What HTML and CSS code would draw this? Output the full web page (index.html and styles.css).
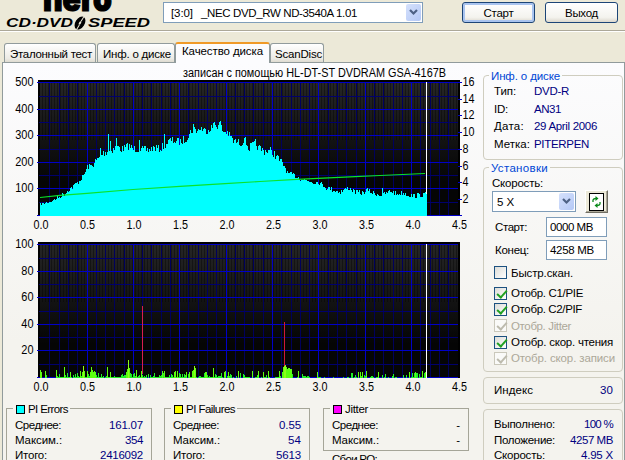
FILE: index.html
```html
<!DOCTYPE html>
<html lang="ru">
<head>
<meta charset="utf-8">
<title>Nero CD-DVD Speed</title>
<link rel="stylesheet" href="styles.css">
</head>
<body>
<div class="window">
  <header class="toolbar">
    <svg class="logo" width="163" height="30" viewBox="0 0 163 30">
      <text class="nero" x="43" y="10.5" textLength="69" lengthAdjust="spacingAndGlyphs">nero</text>
      <text class="product" x="6" y="27" textLength="67" lengthAdjust="spacingAndGlyphs">CD·DVD</text>
      <text class="product" x="88" y="27" textLength="62" lengthAdjust="spacingAndGlyphs">SPEED</text>
      <g transform="rotate(32 80 23)"><ellipse cx="80" cy="23" rx="4.6" ry="7.2"/><path d="M80 16v5M80.500 25v5" stroke="#ece9d8" stroke-width="1"/><ellipse cx="80" cy="23" rx="1" ry="2" fill="#ece9d8"/></g>
    </svg>
    <div class="combo drive"><span data-w="21">[3:0]</span><span class="model" data-w="155">_NEC DVD_RW ND-3540A 1.01</span><i class="arrow"><svg width="9" height="7" viewBox="0 0 9 7"><path d="M1 1l3.500 3.500L8 1"/></svg></i></div>
    <button class="btn default"><span data-w="29">Старт</span></button>
    <button class="btn"><span data-w="32">Выход</span></button>
  </header>
  <nav class="tabs">
    <div class="tab t1"><span data-w="81">Эталонный тест</span></div>
    <div class="tab t2"><span data-w="67">Инф. о диске</span></div>
    <div class="tab t3 active"><span data-w="80">Качество диска</span></div>
    <div class="tab t4"><span data-w="46">ScanDisc</span></div>
  </nav>
  <main class="page">
    <section class="left">
      <svg class="chart" id="pie" width="480" height="167" viewBox="3 63 480 167"></svg>
      <svg class="chart" id="pif" width="480" height="167" viewBox="3 230 480 167"></svg>
      <div class="stats">
        <div class="stat tall">
          <h3><i class="sw cyan"></i><span data-w="39">PI Errors</span></h3>
          <p><span data-w="45">Среднее:</span><b data-w="33">161.07</b></p>
          <p><span data-w="46">Максим.:</span><b data-w="17">354</b></p>
          <p><span data-w="31">Итого:</span><b data-w="42">2416092</b></p>
        </div>
        <div class="stat tall">
          <h3><i class="sw yellow"></i><span data-w="48">PI Failures</span></h3>
          <p><span data-w="45">Среднее:</span><b data-w="21">0.55</b></p>
          <p><span data-w="46">Максим.:</span><b data-w="12">54</b></p>
          <p><span data-w="31">Итого:</span><b data-w="24">5613</b></p>
        </div>
        <div class="third">
          <div class="stat">
            <h3><i class="sw magenta"></i><span data-w="22">Jitter</span></h3>
            <p><span data-w="45">Среднее:</span><b class="none">-</b></p>
            <p><span data-w="46">Максим.:</span><b class="none">-</b></p>
          </div>
          <p class="po"><span data-w="44">Сбои PO:</span><b>-</b></p>
        </div>
      </div>
    </section>
    <aside class="side">
      <div class="group info">
        <h2><span data-w="68">Инф. о диске</span></h2>
        <p><span data-w="21">Тип:</span></p><b><span data-w="34">DVD-R</span></b>
        <p><span data-w="13">ID:</span></p><b><span data-w="26">AN31</span></b>
        <p><span data-w="29">Дата:</span></p><b><span data-w="62">29 April 2006</span></b>
        <p><span data-w="35">Метка:</span></p><b><span data-w="54">PITERPEN</span></b>
      </div>
      <div class="group settings">
        <h2><span data-w="56">Установки</span></h2>
        <p class="speed"><span data-w="50">Скорость:</span></p>
        <div class="speedrow">
          <div class="combo"><span data-w="16">5 X</span><i class="arrow"><svg width="9" height="7" viewBox="0 0 9 7"><path d="M1 1l3.500 3.500L8 1"/></svg></i></div>
          <div class="refresh"><svg width="15" height="18" viewBox="0 0 15 18"><rect x=".5" y=".5" width="14" height="17" fill="#fff" stroke="#000"/><path d="M4 9V7Q4.500 5.500 7 5.500M11 9v2Q10.500 12.500 8 12.500" fill="none" stroke="#0a8a1a" stroke-width="1.300"/><path d="M6.500 3v5L9.500 5.500zM8.500 10v5L5.500 12.500z" fill="#0a8a1a"/></svg></div>
        </div>
        <div class="field"><span data-w="31">Старт:</span><div class="input"><span data-w="42">0000 MB</span></div></div>
        <div class="field"><span data-w="33">Конец:</span><div class="input"><span data-w="43">4258 MB</span></div></div>
        <div class="checks">
          <label class="check first"><i></i><span data-w="61">Быстр.скан.</span></label>
          <label class="check on"><i></i><span data-w="71">Отобр. C1/PIE</span></label>
          <label class="check on"><i></i><span data-w="70">Отобр. C2/PIF</span></label>
          <label class="check on off"><i></i><span data-w="59">Отобр. Jitter</span></label>
          <label class="check on"><i></i><span data-w="101">Отобр. скор. чтения</span></label>
          <label class="check on off"><i></i><span data-w="103">Отобр. скор. записи</span></label>
        </div>
      </div>
      <div class="group index"><p><span data-w="38">Индекс</span><b data-w="12">30</b></p></div>
      <div class="group progress">
        <p><span data-w="60">Выполнено:</span><b data-w="28">100 %</b></p>
        <p><span data-w="60">Положение:</span><b data-w="42">4257 MB</b></p>
        <p><span data-w="50">Скорость:</span><b data-w="31">4.95 X</b></p>
      </div>
    </aside>
  </main>
</div>
<script src="charts.js"></script>
</body>
</html>
```
FILE: styles.css
```css
* { box-sizing: border-box; margin: 0; padding: 0; }
body { width: 625px; height: 460px; overflow: hidden; background: #ece9d8; font: 11.5px/14px "Liberation Sans", Arial, sans-serif; color: #000; }
b { font-weight: normal; color: #000080; }
i { font-style: normal; }
span, b { white-space: nowrap; }
.window { width: 625px; height: 460px; overflow: hidden; display: flex; flex-direction: column; }

.toolbar { height: 32px; flex: none; display: flex; align-items: flex-start; border-bottom: 1px solid #fff; box-shadow: inset 0 -1px #aca899; }
.logo { flex: none; }
.nero { font: 900 35px "Inter", "Liberation Sans", sans-serif; stroke: #000; stroke-width: 1.2px; }
.product { font: italic 700 12px "Liberation Sans", sans-serif; }
.combo { display: flex; align-items: center; background: #fff; border: 1px solid #7f9db9; }
.arrow { margin-left: auto; width: 15px; align-self: stretch; margin-block: 1px; margin-right: 1px; border-radius: 2px; background: linear-gradient(135deg, #d5e1fc, #b4c8f6); display: flex; align-items: center; justify-content: center; }
.arrow path { fill: none; stroke: #4d6185; stroke-width: 2.2; }
.drive { width: 260px; height: 21px; margin-top: 2px; padding-left: 7px; }
.model { margin-left: 8px; }
.btn { width: 73px; height: 21px; margin: 2px 0 0 39px; font: inherit; border: 1px solid #1c4577; border-radius: 3px; background: linear-gradient(#fff, #f4f3ee 75%, #dcd8cd); line-height: 14px; }
.btn + .btn { margin-left: 10px; }
.btn.default { box-shadow: inset 0 0 0 2px #a9c4ef; }

.tabs { height: 31px; flex: none; display: flex; align-items: flex-end; padding-left: 4px; position: relative; z-index: 1; }
.tab { height: 19px; margin-bottom: 1px; border: 1px solid #919b9c; border-bottom: 0; border-radius: 3px 3px 0 0; background: linear-gradient(#fff, #ecebe5 80%, #dedbd0); padding: 3px 0 0 5px; }
.t1 { width: 92px; }
.t2 { width: 78px; margin-left: 1px; }
.t3 { width: 95px; }
.t4 { width: 54px; padding-left: 4px; }
.tab.active { height: 21px; margin-bottom: 0; padding: 0 0 0 6px; border-top: 2px solid #f09a28; background: #fcfcfe; }

.page { margin: -1px 0 0 2px; width: 623px; height: 398px; flex: none; display: flex; border: 1px solid #919b9c; border-bottom: 0; background: linear-gradient(#fcfcfe, #f4f3ee 70%); }
.left { width: 480px; flex: none; }
.chart { display: block; }
.chart text { font: 12px "Liberation Sans", sans-serif; }
.stats { display: flex; gap: 12px; padding: 11px 0 0 3px; }
.stat { width: 146px; height: 43px; border: 1px solid #a5a598; color: #000; }
.third { margin-left: 1px; }
.stat.tall { height: 70px; }
.stat h3 { font: inherit; width: max-content; height: 14px; margin: -7px 0 2px 6px; padding: 0 2px 0 3px; display: flex; align-items: center; background: #f5f4f0; }
.sw { width: 9px; height: 9px; border: 1px solid #000; margin-right: 3px; }
.cyan { background: #0ff; }
.yellow { background: #ff0; }
.magenta { background: #f0f; }
.stat p, .po { display: flex; justify-content: space-between; height: 15px; line-height: 15px; padding: 0 8px; }
.po { padding: 0 9px; margin-top: 1px; }
.none { color: #000; }

.side { width: 140px; padding: 12px 0 0; }
.group { width: 140px; border: 1px solid #cfcdbf; border-radius: 4px; }
.group h2 { font: inherit; color: #0046d5; height: 14px; width: max-content; margin: -7px 0 0 5px; padding: 0 2px; background: #fbfbfc; }
.info { height: 85px; display: grid; grid-template-columns: 40px 1fr; grid-template-rows: 7px repeat(4, 17.700px); padding-left: 10px; }
.info h2 { grid-column: 1 / 3; margin-left: -5px; }
.info p, .info b { line-height: 16px; }
.settings { height: 205px; margin-top: 7px; }
.settings h2 { background: #f9f9f9; }
.speed { margin: 1px 0 0 8px; }
.speedrow { display: flex; margin: 0 0 0 8px; gap: 9px; }
.speedrow .combo { width: 84px; height: 21px; margin-top: 1px; padding-left: 4px; }
.refresh { width: 23px; height: 23px; border: 1px solid; border-color: #fff #716f64 #716f64 #fff; box-shadow: inset -1px -1px #aca899; background: #ece9d8; display: flex; align-items: center; justify-content: center; }
.field { display: flex; justify-content: space-between; align-items: center; margin: 4px 15px 0 11px; height: 20px; }
.field + .field { margin-top: 3px; }
.input { width: 61px; height: 20px; border: 1px solid #7f9db9; background: #fff; padding: 2px 0 0 3px; }
.checks { margin: 4px 0 0 10px; }
.check { display: flex; align-items: center; height: 16.300px; }
.check.first { height: 17px; margin-bottom: 4px; }
.check i { width: 13px; height: 13px; border: 1px solid #1c5180; background: linear-gradient(135deg, #dcdcd7, #fff); margin-right: 4px; position: relative; }
.check.on i::after { content: ""; position: absolute; left: 4px; top: 0; width: 4px; height: 8px; border: solid #21a121; border-width: 0 2px 2px 0; transform: rotate(42deg); }
.check.off { color: #aca899; }
.check.off i { border-color: #cac8bb; background: #fafaf8; }
.check.off i::after { border-color: #bdbbae; }
.index { height: 27px; margin-top: 5px; padding-top: 5px; }
.progress { height: 70px; margin-top: 5px; padding-top: 7px; }
.index p, .progress p { display: flex; justify-content: space-between; height: 15.700px; padding: 0 9px 0 10px; }
```
FILE: charts.js
```js
// Set each caption to its layout width.
document.querySelectorAll('[data-w]').forEach(el => {
  el.style.display = 'inline-block';
  const natural = el.getBoundingClientRect().width;
  const w = +el.dataset.w + 1;
  el.style.letterSpacing = (w - natural) / el.textContent.length + 'px';
});

const line = (x1, y1, x2, y2, c) =>
  `<path d="M${x1} ${y1}L${x2} ${y2}" stroke="${c}" fill="none" shape-rendering="crispEdges"/>`;
const label = (x, y, w, s, anchor = 'start') =>
  `<text x="${x}" y="${y}" textLength="${w}" lengthAdjust="spacingAndGlyphs" text-anchor="${anchor}">${s}</text>`;
const rect = (x, y, w, h, c) =>
  `<rect x="${x}" y="${y}" width="${w}" height="${h}" fill="${c}" shape-rendering="crispEdges"/>`;
let seed = 7;
const rnd = () => (seed = (seed * 16807) % 2147483647) / 2147483647;

function grid(top, id, max) {
  let s = `<defs><linearGradient id="${id}" x1="0" y1="0" x2="0" y2="1"><stop offset="0" stop-color="#262626"/><stop offset=".75" stop-color="#050505"/></linearGradient></defs>`;
  s += rect(38, top, 422, 136, '#000') + rect(40, top + 2, 418, 133, `url(#${id})`);
  for (let x = 42; x < 458; x += 3) s += line(x + .5, top + 2, x + .5, top + 60, 'rgba(0,0,0,.35)');
  for (let i = 1; i < 45; i++) if (i % 5) {
    const x = Math.round(40 + i * 9.28) + .5;
    s += line(x, top + 2, x, top + 135, '#00005c');
  }
  for (let i = 0; i < 5; i++) {
    const y = Math.round(top + 15.500 + i * 26.600) + .5;
    s += line(39, y, 458, y, '#00006c');
  }
  for (let i = 1; i < 9; i++) {
    const x = Math.round(40.200 + i * 46.350) + .5;
    s += line(x, top + 2, x, top + 135, '#0000c8');
  }
  for (let i = 0; i < 6; i++) {
    const y = Math.round(top + 2 + i * 26.600) + .5;
    s += line(37, y, 458, y, '#0000c8');
    if (i < 5) {
      const t = String(max - i * max / 5);
      s += label(33.500, y + 3.200, t.length * 6.100, t, 'end');
    }
  }
  for (let i = 0; i < 10; i++) s += label(33.500 + i * 46.500, top + 148.500, 15, (i / 2).toFixed(1));
  return s;
}

// PI errors: envelope of the bars as [x, y]
const env = [[40,204],[50,202],[57,198],[62,195],[67,191],[72,187],[78,182],[83,176],[87,167],[92,165],[97,160],[100,156],[105,152],[110,150],[117,147],[122,149],[128,146],[133,149],[138,149],[147,150],[153,148],[160,149],[165,144],[170,140],[175,141],[180,142],[185,139],[190,133],[193,128],[197,131],[200,128],[205,131],[210,128],[215,125],[220,125],[223,132],[227,132],[230,138],[233,141],[240,143],[245,141],[248,148],[255,144],[258,148],[265,151],[270,151],[274,154],[279,160],[284,166],[287,173],[293,175],[299,178],[305,180],[312,182],[318,182],[325,187],[330,189],[340,192],[348,188],[356,192],[363,193],[367,190],[372,193],[382,195],[390,191],[397,194],[403,193],[411,196],[420,195],[427,194]];
const spikes = {100:148,108:134,110:141,116:138,139:140,164:134,190:130,193:124,214:122,220:121,231:136,244:138,255:139,382:188};
let s = grid(80, 'g1', 500), d = 'M40 215.500', k = 0;
for (let x = 40; x < 427; x++) {
  while (k < env.length - 2 && env[k + 1][0] <= x) k++;
  const [a, b] = [env[k], env[k + 1]];
  let y = a[1] + (b[1] - a[1]) * (x - a[0]) / (b[0] - a[0]);
  y += (rnd() - .5) * (y < 165 ? 8 : y > 198 ? 2 : 5);
  if (spikes[x]) y = spikes[x];
  d += `V${Math.round(y)}H${x + 1}`;
}
s += `<path d="${d}V216H40z" fill="#0ff" shape-rendering="crispEdges"/>`;
s += '<path d="M40 197.500L60 195.300 87 193.300 133 189.500 180 186.300 225 183.700 260 181.500 297 179.300 355 176.700 380 175.500 425 173.500" stroke="#0be32b" fill="none" stroke-width="1.200"/>';
s += line(426.5, 82, 426.5, 194, '#fff');
s += label(183, 77, 263, 'записан с помощью HL-DT-ST DVDRAM GSA-4167B');
for (let i = 0; i < 8; i++) {
  const v = 16 - i * 2, y = Math.round(82 + i * 16.700) + .5;
  s += line(458, y, 462, y, '#0000c8') + label(462.500, y + 3.200, v > 9 ? 12 : 6, v);
}
s += line(458, 215.5, 462, 215.5, '#0000c8');
document.getElementById('pie').innerHTML = s;

// PI failures
s = grid(242, 'g2', 100);
const tall = {40:8,41:6,45:7,56:8,64:11,83:12,84:7,87:7,91:11,92:8,107:11,127:9,128:18,129:10,136:8,164:7,193:8,194:12,195:10,213:10,252:7,263:6,358:6,362:6,415:6,425:6};
for (let x = 40; x < 427; x++) {
  let h = 0;
  if (x > 282 && x < 292) h = 8 + Math.round(rnd() * 5);
  else {
    const dense = x < 56 ? .1 : x < 232 ? .9 : x < 320 ? .55 : x < 350 ? .12 : .55;
    if (rnd() < dense) h = 1 + Math.floor(Math.pow(rnd(), 2.500) * (x > 78 && x < 100 ? 9 : 7));
    if (x > 413 && x < 418 || x > 423) h = 5;
  }
  h = tall[x] || h;
  if (h) s += rect(x, 378 - h, 1, h, h > 11 ? '#8cff1a' : h > 5 ? '#5cff10' : '#20f02a');
}
s += line(142.5, 306, 142.5, 374, '#d81e50') + line(284.5, 322, 284.5, 366, '#d01838');
s += line(426.5, 244, 426.5, 378, '#fff');
document.getElementById('pif').innerHTML = s;
```
